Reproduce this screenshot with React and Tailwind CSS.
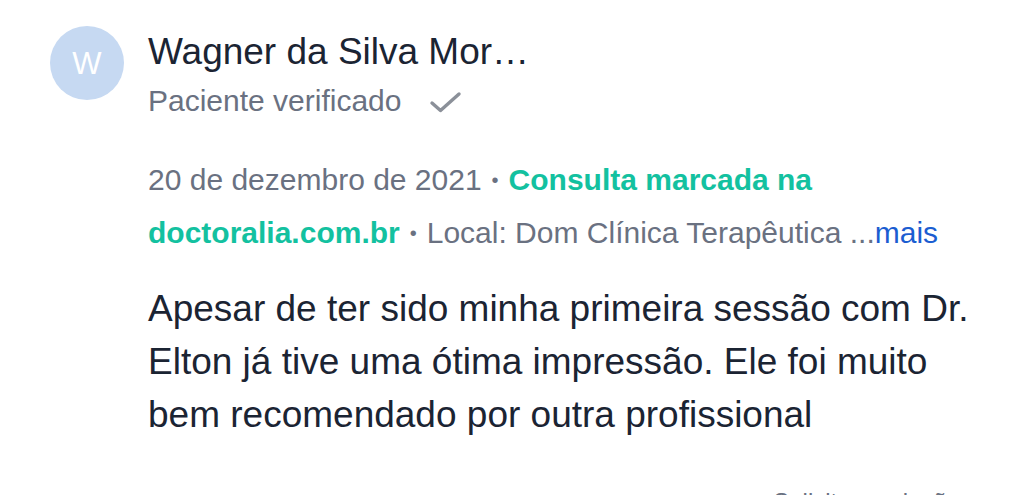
export default function App() {
  const Dot = () => (
    <span className="inline-block mx-[10px] text-[20px] leading-none align-[3px]">•</span>
  );
  return (
    <div className="w-[1024px] h-[495px] overflow-hidden bg-white" style={{ fontFamily: '"Liberation Sans", Arial, sans-serif' }}>
      <div className="flex gap-[24px] pl-[50px] pt-[26px]">
        <div className="w-[74px] h-[74px] rounded-full bg-[#c6d9f2] flex items-center justify-center shrink-0">
          <span className="text-white text-[31px] leading-none">W</span>
        </div>
        <div className="flex flex-col pt-[4px]">
          <div className="text-[37px] leading-[44px] text-[#1b2433]">Wagner da Silva Mor…</div>
          <div className="flex items-center mt-[7px] text-[30px] leading-[40px] text-[#6a7181]">
            <span>Paciente verificado</span>
            <svg className="ml-[28px] mt-[2px]" width="34" height="26" viewBox="0 0 34 26" fill="none">
              <path d="M3 14 L11.5 21.5 L30 5" stroke="#8b9099" strokeWidth="3.4" strokeLinecap="round" strokeLinejoin="round" />
            </svg>
          </div>
          <div className="mt-[32px] text-[30px] leading-[53px] text-[#6a7181] w-[800px]">
            20 de dezembro de 2021<Dot /><span className="font-bold text-[#13c1a0]">Consulta marcada na doctoralia.com.br</span><Dot />Local: Dom Clínica Terapêutica ...<span className="text-[#1b5dd1]">mais</span>
          </div>
          <div className="mt-[23px] text-[37px] leading-[53px] text-[#1b2433] w-[835px]">
            Apesar de ter sido minha primeira sessão com Dr. Elton já tive uma ótima impressão. Ele foi muito bem recomendado por outra profissional
          </div>
          <div className="mt-[41px] text-[24px] leading-[40px] text-[#6a7181] text-right w-[812px]">Solicitar exclusão</div>
        </div>
      </div>
    </div>
  );
}
